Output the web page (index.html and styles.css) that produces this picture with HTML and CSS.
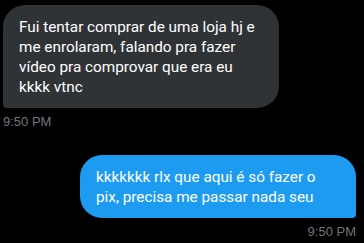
FILE: index.html
```html
<!DOCTYPE html>
<html lang="pt">
<head>
    <meta charset="UTF-8">
    <meta name="viewport" content="width=device-width, initial-scale=1.0">
    <title>Mensagens</title>
    <link rel="stylesheet" href="styles.css">
</head>
<body>
    <div class="chat">
        <div class="message received">
            <div class="bubble">Fui tentar comprar de uma loja hj e me enrolaram, falando pra fazer vídeo pra comprovar que era eu kkkk vtnc</div>
            <span class="time">9:50 PM</span>
        </div>
        <div class="message sent">
            <div class="bubble">kkkkkkk rlx que aqui é só fazer o pix, precisa me passar nada seu</div>
            <span class="time">9:50 PM</span>
        </div>
    </div>
</body>
</html>
```
FILE: styles.css
```css
*{
    margin: 0;
    padding: 0;
    box-sizing: border-box;
}
body{
    background-color: #000;
    font-family: Roboto, "Noto Sans", sans-serif;
    width: 364px;
    height: 243px;
    overflow: hidden;
}
.chat{
    display: flex;
    flex-direction: column;
    gap: 25px;
    padding: 5px 8px 0 3px;
}
.message{
    display: flex;
    flex-direction: column;
}
.message.sent{
    align-items: flex-end;
}
.bubble{
    width: 276px;
    padding: 12px 16px 11px;
    font-size: 15.3px;
    line-height: 20px;
    color: #fff;
}
.received .bubble{
    background-color: #2f3336;
    border-radius: 22px 22px 22px 4px;
}
.sent .bubble{
    background-color: #1d9bf0;
    border-radius: 22px 22px 4px 22px;
}
.time{
    margin-top: 6px;
    font-family: "Liberation Sans", Arial, sans-serif;
    font-size: 13px;
    line-height: 16px;
    color: #71767b;
}
```
